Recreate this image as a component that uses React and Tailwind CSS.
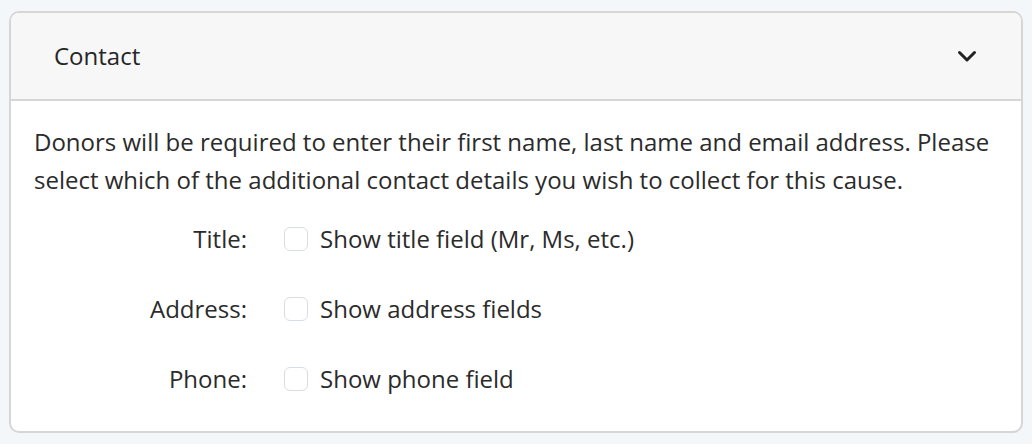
import React from 'react';

const fields = [
  { label: 'Title:', text: 'Show title field (Mr, Ms, etc.)' },
  { label: 'Address:', text: 'Show address fields' },
  { label: 'Phone:', text: 'Show phone field' },
];

const App = () => {
  return (
    <div className="min-h-screen w-[1032px] h-[444px] bg-[#f4f7fa] pt-[11px] pl-[9px] pr-[9px]" style={{ fontFamily: '"Open Sans", sans-serif' }}>
      <div className="h-[422px] rounded-[10px] border-2 border-[#d6d6d6] bg-white overflow-hidden">
        {/* Header */}
        <div className="h-[88px] flex items-center justify-between pl-[43px] pr-[44px] bg-[#f7f7f7] border-b-2 border-[#d6d6d6]">
          <span className="text-[24px] text-[#262626]">Contact</span>
          <svg className="w-[20px] h-[13px] text-[#222]" viewBox="0 0 20 13" fill="none" stroke="currentColor" strokeWidth="3" strokeLinecap="round" strokeLinejoin="round">
            <path d="M2.5 2.5l7.5 7.5 7.5-7.5" />
          </svg>
        </div>

        {/* Body */}
        <div className="pl-[23px] pr-[20px] pt-[22px]">
          <p className="text-[24px] leading-[38px] text-[#2b2b2b]">
            Donors will be required to enter their first name, last name and email address. Please select which of the additional contact details you wish to collect for this cause.
          </p>
          <div className="mt-[21px] flex flex-col gap-[32px]">
            {fields.map((f) => (
              <div key={f.label} className="flex items-center h-[38px]">
                <span className="w-[213px] text-right text-[24px] text-[#2b2b2b]">{f.label}</span>
                <span className="ml-[37px] w-[24px] h-[24px] rounded-[6px] border-[1.5px] border-[#d9dee4] bg-white" />
                <span className="ml-[12px] text-[24px] text-[#2b2b2b]">{f.text}</span>
              </div>
            ))}
          </div>
        </div>
      </div>
    </div>
  );
};

export default App;
